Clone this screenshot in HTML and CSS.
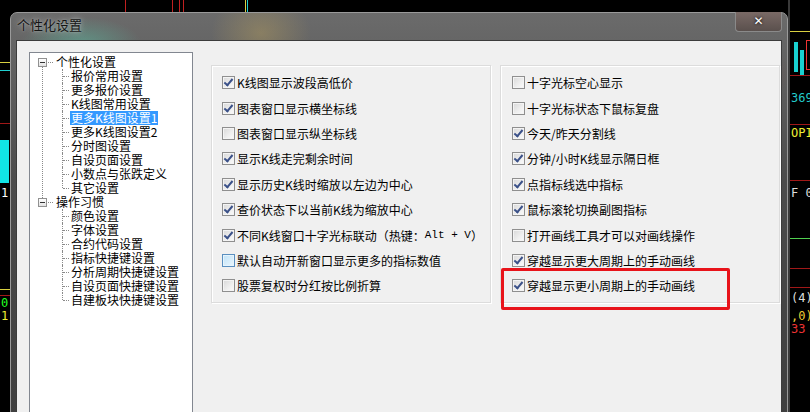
FILE: index.html
```html
<!DOCTYPE html>
<html lang="zh-CN">
<head>
    <meta charset="UTF-8">
    <title>个性化设置</title>
    <link rel="stylesheet" href="styles.css">
</head>
<body>
    <div class="screen">
        <!-- chart lines above the dialog -->
        <div class="chart-top">
            <span class="ct-line" style="left:125px;background:#c02020"></span>
            <span class="ct-line" style="left:172px;background:#c02020"></span>
            <span class="ct-line" style="left:179px;background:#c02020"></span>
            <span class="ct-line" style="left:183px;background:#c02020"></span>
            <span class="ct-line" style="left:245px;background:#d8d040"></span>
            <span class="ct-line" style="left:247px;background:#20d0d0"></span>
        </div>

        <!-- chart behind the dialog, left side -->
        <div class="chart chart-left">
            <span class="cl-line cl-yellow" style="top:62px"></span>
            <span class="cl-line cl-cyan" style="top:70px"></span>
            <span class="cl-line cl-red" style="top:123px"></span>
            <span class="cl-block"></span>
            <span class="cl-text" style="top:186px;color:#fff">1.</span>
            <span class="cl-line cl-yellow" style="top:289px"></span>
            <span class="cl-line cl-red" style="top:295px"></span>
            <span class="cl-text" style="top:296px;color:#2f2">0</span>
            <span class="cl-text" style="top:309px;color:#ee3">1</span>
        </div>

        <!-- Dialog -->
        <div class="window">
            <div class="titlebar">
                <span class="title">个性化设置</span>
                <div class="close">✕</div>
            </div>

            <div class="client">
                <!-- Tree -->
                <div class="tree">
                    <div class="root has-sibling">
                        <div class="root-label"><span class="expander"></span><span class="text">个性化设置</span></div>
                        <ul class="children">
                            <li><span class="text">报价常用设置</span></li>
                            <li><span class="text">更多报价设置</span></li>
                            <li><span class="text">K线图常用设置</span></li>
                            <li><span class="text selected">更多K线图设置1</span></li>
                            <li><span class="text">更多K线图设置2</span></li>
                            <li><span class="text">分时图设置</span></li>
                            <li><span class="text">自设页面设置</span></li>
                            <li><span class="text">小数点与张跌定义</span></li>
                            <li><span class="text">其它设置</span></li>
                        </ul>
                    </div>
                    <div class="root">
                        <div class="root-label"><span class="expander"></span><span class="text">操作习惯</span></div>
                        <ul class="children">
                            <li><span class="text">颜色设置</span></li>
                            <li><span class="text">字体设置</span></li>
                            <li><span class="text">合约代码设置</span></li>
                            <li><span class="text">指标快捷键设置</span></li>
                            <li><span class="text">分析周期快捷键设置</span></li>
                            <li><span class="text">自设页面快捷键设置</span></li>
                            <li><span class="text">自建板块快捷键设置</span></li>
                        </ul>
                    </div>
                </div>

                <!-- Left options -->
                <div class="group">
                    <label class="row"><span class="cb checked"></span>K线图显示波段高低价</label>
                    <label class="row"><span class="cb checked"></span>图表窗口显示横坐标线</label>
                    <label class="row"><span class="cb"></span>图表窗口显示纵坐标线</label>
                    <label class="row"><span class="cb checked"></span>显示K线走完剩余时间</label>
                    <label class="row"><span class="cb checked"></span>显示历史K线时缩放以左边为中心</label>
                    <label class="row"><span class="cb checked"></span>查价状态下以当前K线为缩放中心</label>
                    <label class="row"><span class="cb checked"></span>不同K线窗口十字光标联动（热键：<span class="mono">Alt + V</span>）</label>
                    <label class="row"><span class="cb hover"></span>默认自动开新窗口显示更多的指标数值</label>
                    <label class="row"><span class="cb"></span>股票复权时分红按比例折算</label>
                </div>

                <!-- Right options -->
                <div class="group group-right">
                    <label class="row"><span class="cb"></span>十字光标空心显示</label>
                    <label class="row"><span class="cb"></span>十字光标状态下鼠标复盘</label>
                    <label class="row"><span class="cb checked"></span>今天/昨天分割线</label>
                    <label class="row"><span class="cb checked"></span>分钟/小时K线显示隔日框</label>
                    <label class="row"><span class="cb checked"></span>点指标线选中指标</label>
                    <label class="row"><span class="cb checked"></span>鼠标滚轮切换副图指标</label>
                    <label class="row"><span class="cb"></span>打开画线工具才可以对画线操作</label>
                    <label class="row"><span class="cb checked"></span>穿越显示更大周期上的手动画线</label>
                    <label class="row"><span class="cb checked"></span>穿越显示更小周期上的手动画线</label>
                    <div class="highlight"></div>
                </div>
            </div>
        </div>

        <!-- chart behind the dialog, right side -->
        <div class="chart chart-right">
            <span class="cr-line cr-yellow" style="top:31px"></span>
            <span class="cr-candle" style="top:42px;left:4px;height:30px;background:#19d0d0"></span>
            <span class="cr-candle" style="top:50px;left:10px;height:25px;background:#19d0d0"></span>
            <span class="cr-candle" style="top:40px;left:16px;height:28px;background:none;border:1px solid #e33"></span>
            <span class="cr-line cr-red" style="top:75px"></span>
            <span class="cr-text" style="top:91px;color:#2cc">369</span>
            <span class="cr-line cr-red" style="top:124px"></span>
            <span class="cr-text" style="top:126px;color:#ee3">OPI</span>
            <span class="cr-line cr-red" style="top:180px"></span>
            <span class="cr-text" style="top:186px;color:#ddd">F 0.</span>
            <span class="cr-line cr-green" style="top:238px"></span>
            <span class="cr-line cr-red" style="top:268px"></span>
            <span class="cr-line cr-red" style="top:287px"></span>
            <span class="cr-text" style="top:291px;color:#ddd">(4)</span>
            <span class="cr-text" style="top:309px;color:#ec3">,0)</span>
            <span class="cr-text" style="top:322px;color:#e33">33</span>
        </div>
    </div>
</body>
</html>
```

FILE: styles.css
```css
/* General */
body {
    margin: 0;
    background: #000;
    font-family: "Noto Sans CJK SC", "Noto Sans", sans-serif;
    font-size: 12px;
    color: #000;
}

.screen {
    width: 810px;
    height: 412px;
    overflow: hidden;
    display: flex;
    position: relative;
}

/* Background chart */
.chart-top {
    position: absolute;
    left: 0;
    top: 0;
    width: 810px;
    height: 12px;
}

.ct-line {
    position: absolute;
    top: 0;
    width: 1px;
    height: 12px;
}

.chart {
    position: relative;
    background: #000;
    height: 412px;
    flex-shrink: 0;
    overflow: hidden;
}

.chart-left {
    width: 10px;
}

.chart-right {
    width: 20px;
    border-left: 2px solid #3a3a3a;
}

.cl-line, .cr-line {
    position: absolute;
    left: 0;
    right: 0;
    height: 1px;
}

.cl-yellow, .cr-yellow { background: #d8d040; }
.cl-cyan { background: #20d0d0; }
.cl-red, .cr-red { background: #a01818; }
.cr-green { background: #50d050; }

.cl-block {
    position: absolute;
    left: 0;
    width: 9px;
    top: 140px;
    height: 43px;
    background: #11e5e5;
}

.cl-text, .cr-text {
    position: absolute;
    left: 1px;
    font-family: "DejaVu Sans Mono", monospace;
    font-size: 12px;
    line-height: 14px;
    white-space: nowrap;
}

.cr-candle {
    position: absolute;
    width: 4px;
}

/* Dialog window */
.window {
    width: 778px;
    margin-top: 12px;
    height: 420px;
    flex-shrink: 0;
    border-radius: 7px 7px 0 0;
    border: 1px solid #9a9a9a;
    box-sizing: border-box;
    padding: 0 5px;
    background:
        radial-gradient(ellipse 60px 26px at 70px 30px, rgba(90, 200, 170, 0.45), transparent),
        radial-gradient(ellipse 50px 40px at 250px 20px, rgba(200, 170, 90, 0.35), transparent),
        radial-gradient(ellipse 40px 30px at 740px 60px, rgba(120, 70, 60, 0.4), transparent),
        linear-gradient(180deg, #6b6b6b 0%, #4c4c4c 40%, #3e3e3e 100%);
}

.titlebar {
    height: 27px;
    display: flex;
    justify-content: space-between;
    align-items: flex-start;
}

.title {
    margin-top: 4px;
    margin-left: 1px;
    font-size: 13px;
    line-height: 16px;
    color: #141414;
    text-shadow: 0 0 6px rgba(220, 220, 220, 0.7), 0 0 2px rgba(200, 200, 200, 0.6);
}

.close {
    width: 45px;
    height: 19px;
    margin-top: -1px;
    border: 1px solid #8a8a8a;
    border-top: none;
    border-radius: 0 0 4px 4px;
    background: linear-gradient(180deg, #7a6a66 0%, #5a504d 100%);
    color: #fff;
    font-family: "DejaVu Sans", sans-serif;
    font-weight: bold;
    font-size: 12px;
    line-height: 19px;
    text-align: center;
    text-shadow: 0 0 3px #000;
}

.client {
    height: 380px;
    background: #f0f0f0;
    border: 1px solid #3c3c3c;
    box-sizing: border-box;
    display: flex;
    align-items: flex-start;
    padding: 11px 0 0 12px;
}

/* Tree */
.tree {
    width: 164px;
    height: 370px;
    flex-shrink: 0;
    box-sizing: border-box;
    background: #fff;
    border: 1px solid #828790;
    padding: 2px 0 0 0;
    font-size: 12px;
    line-height: 14px;
}

.root {
    position: relative;
}

.root.has-sibling::before {
    content: "";
    position: absolute;
    left: 12px;
    top: 11px;
    bottom: -3px;
    border-left: 1px dotted #8a8a8a;
}

.root-label {
    height: 14px;
    display: flex;
    align-items: center;
    position: relative;
}

.expander {
    width: 7px;
    height: 7px;
    margin-left: 8px;
    border: 1px solid #919191;
    background: linear-gradient(#fff, #e2e2e2);
    position: relative;
    z-index: 1;
}

.expander::after {
    content: "";
    position: absolute;
    left: 1px;
    right: 1px;
    top: 3px;
    height: 1px;
    background: #333;
}

.root-label::after {
    content: "";
    position: absolute;
    left: 18px;
    width: 5px;
    top: 7px;
    border-top: 1px dotted #8a8a8a;
}

.root-label .text {
    margin-left: 8px;
}

.children {
    list-style: none;
    margin: 0;
    padding: 0;
}

.children li {
    height: 14px;
    position: relative;
    padding-left: 40px;
    white-space: nowrap;
}

.children li::before {
    content: "";
    position: absolute;
    left: 32px;
    top: 0;
    height: 14px;
    border-left: 1px dotted #8a8a8a;
}

.children li:last-child::before {
    height: 7px;
}

.children li::after {
    content: "";
    position: absolute;
    left: 33px;
    width: 6px;
    top: 7px;
    border-top: 1px dotted #8a8a8a;
}

.text {
    display: inline-block;
    height: 14px;
    line-height: 14px;
    padding: 0 1px;
    white-space: nowrap;
    vertical-align: top;
}

.text.selected {
    background: #3399ff;
    color: #fff;
}

/* Option groups */
.group {
    width: 281px;
    height: 239px;
    flex-shrink: 0;
    margin-top: 13px;
    margin-left: 18px;
    box-sizing: border-box;
    border: 1px solid #dcdcdc;
    border-right-color: #fff;
    border-bottom-color: #fff;
    box-shadow: inset -1px -1px 0 #dcdcdc, inset 1px 1px 0 #fff;
    padding: 4px 0 0 10px;
    position: relative;
}

.group-right {
    margin-left: 8px;
    padding-left: 11px;
}

.row {
    display: flex;
    align-items: center;
    height: 25.4px;
    white-space: nowrap;
    font-size: 12px;
}

.mono {
    font-family: "Liberation Mono", monospace;
    font-size: 11px;
}

/* Checkboxes */
.cb {
    width: 11px;
    height: 11px;
    margin-right: 2px;
    border: 1px solid #8f8f8f;
    background: linear-gradient(135deg, #d8d8d8 0%, #efefef 60%, #fbfbfb 100%);
    box-shadow: inset 0 0 0 1px #f4f4f4;
    flex-shrink: 0;
    position: relative;
}

.cb.checked::after {
    content: "";
    position: absolute;
    left: 3px;
    top: 0px;
    width: 3px;
    height: 7px;
    border: solid #3b5189;
    border-width: 0 2px 2px 0;
    transform: rotate(40deg);
}

.cb.hover {
    border-color: #5a8fc0;
    background: linear-gradient(135deg, #bfe2f7 0%, #d9eefb 60%, #eaf6fd 100%);
    box-shadow: inset 0 0 0 1px #e6f4fc;
}

/* Red annotation box */
.highlight {
    position: absolute;
    left: 0;
    top: 202px;
    width: 229px;
    height: 42px;
    box-sizing: border-box;
    border: 3px solid #e8131a;
    border-radius: 2px;
}
```
